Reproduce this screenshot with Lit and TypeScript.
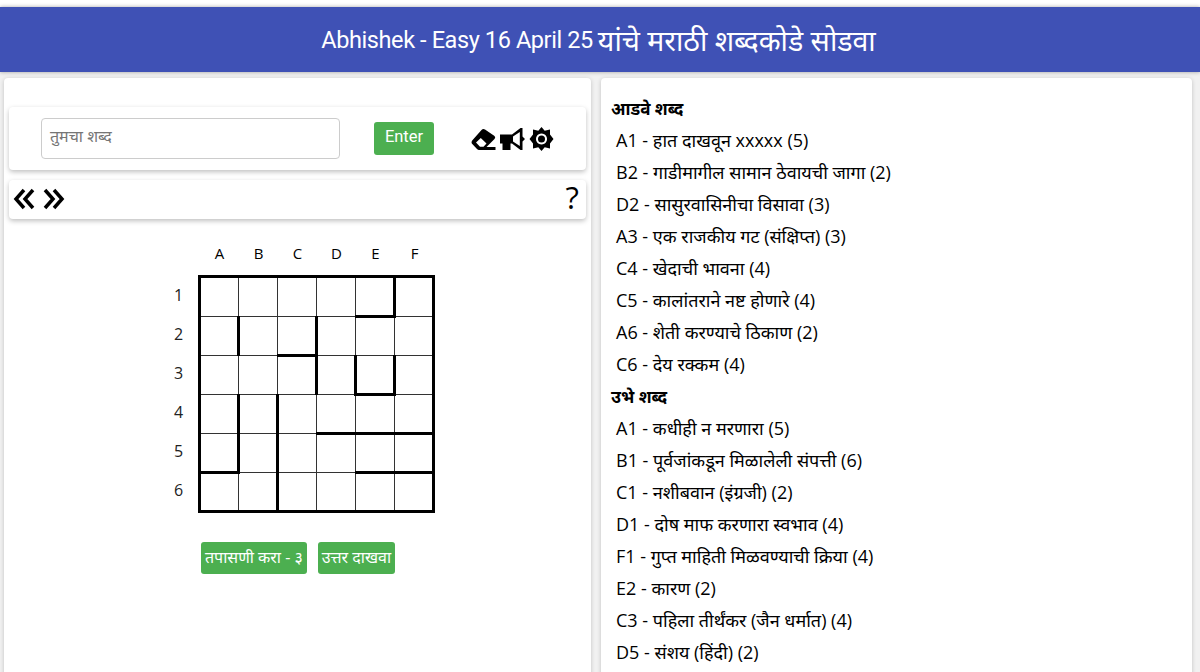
import { LitElement, html, css, svg } from "lit";
import { customElement } from "lit/decorators.js";

const across = [
  "A1 - हात दाखवून xxxxx (5)",
  "B2 - गाडीमागील सामान ठेवायची जागा (2)",
  "D2 - सासुरवासिनीचा विसावा (3)",
  "A3 - एक राजकीय गट (संक्षिप्त) (3)",
  "C4 - खेदाची भावना (4)",
  "C5 - कालांतराने नष्ट होणारे (4)",
  "A6 - शेती करण्याचे ठिकाण (2)",
  "C6 - देय रक्कम (4)",
];
const down = [
  "A1 - कधीही न मरणारा (5)",
  "B1 - पूर्वजांकडून मिळालेली संपत्ती (6)",
  "C1 - नशीबवान (इंग्रजी) (2)",
  "D1 - दोष माफ करणारा स्वभाव (4)",
  "F1 - गुप्त माहिती मिळवण्याची क्रिया (4)",
  "E2 - कारण (2)",
  "C3 - पहिला तीर्थंकर (जैन धर्मात) (4)",
  "D5 - संशय (हिंदी) (2)",
];
const cols = ["A", "B", "C", "D", "E", "F"];
const rows = [1, 2, 3, 4, 5, 6];
// thick cell edges: r = right, b = bottom
const thick: Record<string, string> = {
  E1: "r b",
  A2: "r",
  C2: "r b",
  C3: "r",
  D3: "r",
  E3: "r b",
  A4: "r",
  B4: "r",
  D4: "b",
  E4: "b",
  F4: "b",
  A5: "r b",
  B5: "r",
  E5: "b",
  F5: "b",
  B6: "r",
};

@customElement("app-root")
export class AppRoot extends LitElement {
  static styles = css`
    :host {
      display: block;
      width: 1200px;
      height: 672px;
      overflow: hidden;
      background: #fff;
      font-family: "Open Sans", "Noto Sans", sans-serif;
      color: #000;
      padding-top: 7px;
      box-sizing: border-box;
    }
    .top {
      height: 65px;
      background: #3f51b5;
      color: #fff;
      display: flex;
      align-items: center;
      justify-content: center;
      gap: 5px;
      padding-right: 3px;
      box-sizing: border-box;
      font-size: 28.500px;
      box-shadow: 0 0 4px rgba(0, 0, 0, 0.35);
      position: relative;
    }
    .top .latin {
      font-family: Roboto, sans-serif;
      font-size: 23.500px;
      letter-spacing: -0.4px;
    }
    .main {
      display: grid;
      grid-template-columns: 587px 591px;
      gap: 10px;
      padding: 6px 8px 0 4px;
      height: 600px;
      background: #f1f1f1;
    }
    .card {
      background: #fff;
      border-radius: 4px;
      box-shadow: 0 1px 4px rgba(0, 0, 0, 0.2);
    }
    .left {
      padding: 29px 5px 0;
      box-sizing: border-box;
      height: 640px;
    }
    .bar {
      background: #fff;
      border-radius: 4px;
      box-shadow: 0 2px 5px rgba(0, 0, 0, 0.25);
    }
    .entry {
      height: 63px;
      display: flex;
      align-items: center;
      padding-left: 32px;
    }
    .input {
      width: 299px;
      height: 41px;
      box-sizing: border-box;
      border: 1px solid #ccc;
      border-radius: 4px;
      padding: 0 8px;
      font-size: 16px;
      color: #757575;
      line-height: 34px;
    }
    .btn {
      background: #4caf50;
      color: #fff;
      border-radius: 3px;
      display: flex;
      align-items: center;
      justify-content: center;
    }
    .enter {
      width: 60px;
      height: 33px;
      margin-left: 34px;
      padding-bottom: 4px;
      box-sizing: border-box;
      font-family: Roboto, sans-serif;
      font-size: 16.500px;
    }
    .icons {
      display: flex;
      align-items: center;
      gap: 4px;
      margin-left: 37px;
    }
    .icons svg {
      display: block;
    }
    .nav {
      height: 39px;
      margin-top: 10px;
      display: flex;
      align-items: center;
      justify-content: space-between;
      padding: 0 7px 0 4px;
    }
    .arrows {
      display: flex;
      gap: 8px;
      margin-top: -2px;
    }
    .arrows svg {
      display: block;
    }
    .help {
      font-size: 31px;
      font-weight: 500;
      line-height: 34px;
      margin-top: -6px;
    }
    .board {
      margin: 25px 0 0 156px;
      display: grid;
      grid-template-columns: 33px max-content;
      grid-template-rows: 20px auto;
      row-gap: 11px;
    }
    .head {
      grid-column: 2;
      display: grid;
      grid-template-columns: repeat(6, 39px);
      padding-left: 2px;
      margin-top: -1px;
      text-align: center;
      font-size: 15px;
      line-height: 20px;
    }
    .side {
      display: grid;
      grid-template-rows: repeat(6, 39px);
      font-size: 16px;
      align-items: center;
      padding-left: 9px;
      color: #222;
    }
    table {
      border-collapse: collapse;
      table-layout: fixed;
      width: 234px;
      border: 3px solid #000;
    }
    td {
      width: 39px;
      height: 39px;
      box-sizing: border-box;
      padding: 0;
      border: 1px solid #333;
    }
    tr:first-child td {
      height: 40px;
    }
    td.r {
      border-right: 3px solid #000;
    }
    td.b {
      border-bottom: 3px solid #000;
    }
    .actions {
      display: flex;
      gap: 11px;
      margin: 29px 0 0 192px;
    }
    .actions .btn {
      height: 32px;
      padding: 0 4px 2px;
      font-size: 16px;
      box-sizing: border-box;
    }
    .right {
      padding: 15px 10px 0;
      height: 640px;
      box-sizing: border-box;
    }
    .title {
      font-weight: 700;
      font-size: 17px;
      line-height: 32px;
    }
    .clue {
      font-size: 18px;
      line-height: 30px;
      padding: 0 0 2px 5px;
    }
  `;

  private renderCell(c: string, r: number) {
    return html`<td class=${thick[c + r] ?? ""}></td>`;
  }

  render() {
    return html`
      <div class="top"><span class="latin">Abhishek - Easy 16 April 25</span><span>यांचे मराठी शब्दकोडे सोडवा</span></div>
      <div class="main">
        <div class="card left">
          <div class="bar entry">
            <div class="input">तुमचा शब्द</div>
            <div class="btn enter">Enter</div>
            <div class="icons">
              <svg width="25" height="24" viewBox="0 0 25 24">
                <path fill-rule="evenodd" d="M10.500 3 Q12 1.500 14 2.500 L23.500 9 Q25 10.500 23.500 12 L15.500 20 L24.500 20 L24.500 23 L8 23 Q7 23 6 22 L0.800 16.500 Q0 15 1.200 13.500 Z M5 15.500 L9 19.800 L12.500 19.800 L15.500 16.500 L9.800 11 Z"/>
              </svg>
              <svg width="25" height="24" viewBox="0 0 25 24">
                <path d="M0 7.500 L12 7.500 L20.500 1 L22.500 1 L22.500 9.500 L25 12 L22.500 14.500 L22.500 23 L20.500 23 L12 16.500 L10.500 16.500 L10.500 23 L2.500 23 L2.500 16.500 L0 16.500 Z"/>
                <path fill="#fff" d="M13 9.500 L19.800 5 L19.800 19 L13 14.500 Z"/>
              </svg>
              <svg width="25" height="24" viewBox="0 0 24 24">
                <path fill-rule="evenodd" d="M12 0 L15.200 3.700 L20.500 2.500 L20.500 7.500 L24 12 L20.500 16.500 L20.500 21.500 L15.200 20.300 L12 24 L8.800 20.300 L3.500 21.500 L3.500 16.500 L0 12 L3.500 7.500 L3.500 2.500 L8.800 3.700 Z M12 6.500 A5.500 5.500 0 1 0 12.010 6.500 Z"/>
                <circle cx="12" cy="12" r="3.500"/>
              </svg>
            </div>
          </div>
          <div class="bar nav">
            <div class="arrows">
              ${["M11 2 L3 11 L11 20 M20 2 L12 11 L20 20", "M2 2 L10 11 L2 20 M11 2 L19 11 L11 20"].map(
                (d) => html`<svg width="22" height="22" viewBox="0 0 22 22">
                  ${svg`<path d=${d} fill="none" stroke="#000" stroke-width="3.500"/>`}
                </svg>`
              )}
            </div>
            <div class="help">?</div>
          </div>
          <div class="board">
            <div class="head">${cols.map((c) => html`<div>${c}</div>`)}</div>
            <div class="side">${rows.map((n) => html`<div>${n}</div>`)}</div>
            <table>
              ${rows.map((r) => html`<tr>${cols.map((c) => this.renderCell(c, r))}</tr>`)}
            </table>
          </div>
          <div class="actions">
            <div class="btn">तपासणी करा - ३</div>
            <div class="btn">उत्तर दाखवा</div>
          </div>
        </div>
        <div class="card right">
          <div class="title">आडवे शब्द</div>
          ${across.map((c) => html`<div class="clue">${c}</div>`)}
          <div class="title">उभे शब्द</div>
          ${down.map((c) => html`<div class="clue">${c}</div>`)}
        </div>
      </div>
    `;
  }
}
